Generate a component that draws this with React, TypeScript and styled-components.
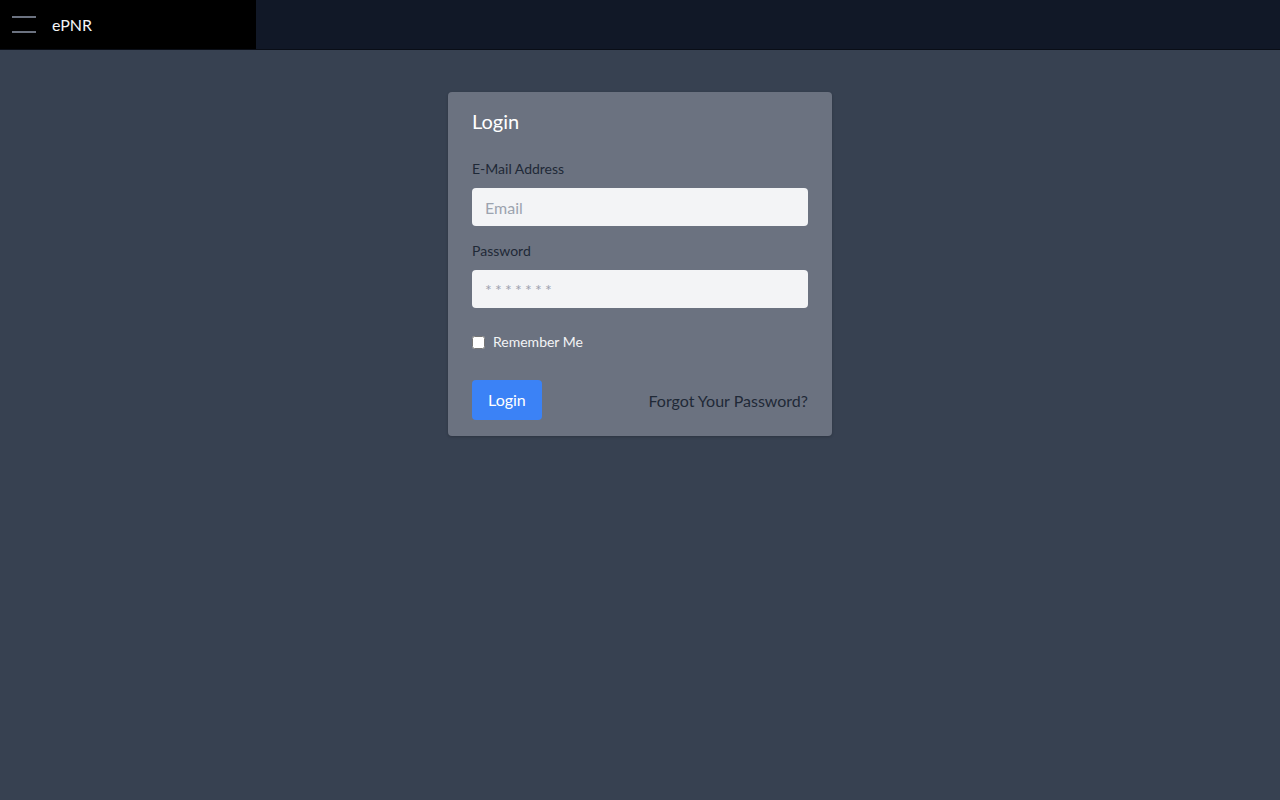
import React from "react";
import styled, { createGlobalStyle } from "styled-components";

const Global = createGlobalStyle`
  html, body { margin: 0; padding: 0; }
  body {
    background: #374151;
    font-family: Lato, "Liberation Sans", Arial, sans-serif;
    min-height: 100vh;
  }
  * { box-sizing: border-box; }
`;

const Page = styled.div`
  min-height: 100vh;
  display: flex;
  flex-direction: column;
`;

const TopBar = styled.header`
  height: 50px;
  display: flex;
  background: #111827;
  border-bottom: 1px solid #0a0e17;
`;

const Brand = styled.div`
  width: 256px;
  background: #000;
  display: flex;
  align-items: center;
  padding-left: 12px;
  gap: 16px;
`;

const Burger = styled.button`
  width: 24px;
  height: 17px;
  padding: 0;
  border: none;
  background: transparent;
  display: flex;
  flex-direction: column;
  justify-content: space-between;
  & > span {
    display: block;
    height: 2px;
    background: #6b7280;
  }
`;

const BrandName = styled.span`
  color: #f3f4f6;
  font-size: 16px;
`;

const Main = styled.main`
  display: flex;
  justify-content: center;
  padding-top: 42px;
`;

const Card = styled.form`
  width: 384px;
  background: #6b7280;
  border-radius: 4px;
  padding: 15px 24px 16px;
  box-shadow: 0 1px 3px rgba(0, 0, 0, 0.2);
  display: flex;
  flex-direction: column;
`;

const Title = styled.h2`
  margin: 0 0 24px;
  font-size: 20px;
  line-height: 28px;
  font-weight: 400;
  color: #ffffff;
`;

const Label = styled.label`
  display: block;
  font-size: 14px;
  line-height: 20px;
  color: #1f2937;
  margin-bottom: 9px;
`;

const Field = styled.div<{ $mb: number }>`
  margin-bottom: ${(p) => p.$mb}px;
`;

const Input = styled.input<{ $spaced?: boolean }>`
  width: 100%;
  height: 38px;
  border: none;
  border-radius: 4px;
  background: #f3f4f6;
  padding: 0 13px;
  font-family: inherit;
  font-size: 16px;
  color: #1f2937;
  outline: none;
  &::placeholder {
    color: #9ca3af;
    letter-spacing: ${(p) => (p.$spaced ? "3.2px" : "normal")};
  }
`;

const CheckRow = styled.label`
  display: flex;
  align-items: center;
  gap: 8px;
  font-size: 14px;
  line-height: 20px;
  color: #f3f4f6;
  margin-bottom: 28px;
  & input {
    margin: 0;
    width: 13px;
    height: 13px;
  }
`;

const Actions = styled.div`
  display: flex;
  align-items: center;
  justify-content: space-between;
`;

const Button = styled.button`
  background: #3b82f6;
  color: #fff;
  border: none;
  border-radius: 4px;
  padding: 8px 16px;
  font-family: inherit;
  font-size: 16px;
  line-height: 24px;
`;

const Link = styled.a`
  color: #1f2937;
  font-size: 16px;
  text-decoration: none;
`;

export default function App() {
  return (
    <Page>
      <Global />
      <TopBar>
        <Brand>
          <Burger aria-label="menu">
            <span />
            <span />
          </Burger>
          <BrandName>ePNR</BrandName>
        </Brand>
      </TopBar>
      <Main>
        <Card onSubmit={(e) => e.preventDefault()}>
          <Title>Login</Title>
          <Field $mb={15}>
            <Label>E-Mail Address</Label>
            <Input type="email" placeholder="Email" />
          </Field>
          <Field $mb={24}>
            <Label>Password</Label>
            <Input type="password" placeholder="*******" $spaced />
          </Field>
          <CheckRow>
            <input type="checkbox" />
            Remember Me
          </CheckRow>
          <Actions>
            <Button type="submit">Login</Button>
            <Link href="#">Forgot Your Password?</Link>
          </Actions>
        </Card>
      </Main>
    </Page>
  );
}
